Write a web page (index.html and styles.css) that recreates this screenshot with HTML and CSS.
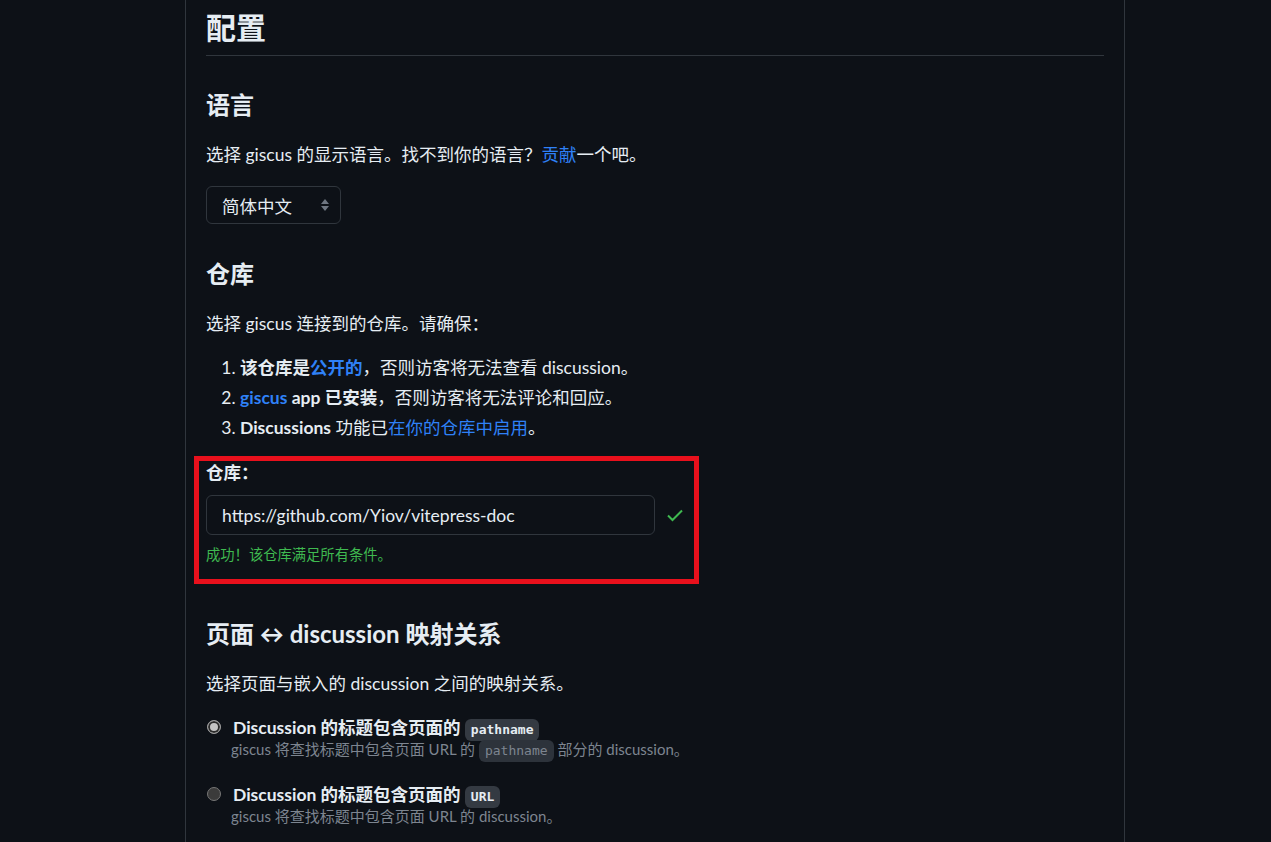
FILE: index.html
```html
<!DOCTYPE html>
<html lang="zh-CN">
<head>
    <meta charset="UTF-8">
    <meta name="viewport" content="width=device-width, initial-scale=1.0">
    <title>giscus 配置</title>
    <link rel="stylesheet" href="styles.css">
</head>
<body>
    <main class="page">
        <h2 class="section-title">配置</h2>

        <h3 class="sub-title first">语言</h3>
        <p class="text">选择 giscus 的显示语言。找不到你的语言？<a href="#">贡献</a>一个吧。</p>
        <div class="select">
            <span>简体中文</span>
            <span class="select-arrows">
                <svg width="10" height="16" viewBox="0 0 10 16"><path d="M5 2 L9 7 H1 Z M1 9 H9 L5 14 Z" fill="#6e7681"/></svg>
            </span>
        </div>

        <h3 class="sub-title">仓库</h3>
        <p class="text">选择 giscus 连接到的仓库。请确保：</p>
        <ol class="checklist">
            <li><strong>该仓库是<a href="#">公开的</a></strong>，否则访客将无法查看 discussion。</li>
            <li><strong><a href="#">giscus</a> app 已安装</strong>，否则访客将无法评论和回应。</li>
            <li><strong>Discussions</strong> 功能已<a href="#">在你的仓库中启用</a>。</li>
        </ol>

        <div class="highlight">
            <label class="field-label">仓库：</label>
            <div class="field-row">
                <div class="input">https://github.com/Yiov/vitepress-doc</div>
                <svg class="check" width="18" height="14" viewBox="0 0 18 14"><path d="M2 7.5 L6.5 12 L16 2.5" fill="none" stroke="#3fb950" stroke-width="2"/></svg>
            </div>
            <p class="success">成功！该仓库满足所有条件。</p>
        </div>

        <h3 class="sub-title">页面 ↔ discussion 映射关系</h3>
        <p class="text">选择页面与嵌入的 discussion 之间的映射关系。</p>

        <div class="radio-list">
            <div class="radio-item">
                <span class="radio checked"></span>
                <div>
                    <div class="radio-label">Discussion 的标题包含页面的 <code class="badge">pathname</code></div>
                    <div class="radio-desc">giscus 将查找标题中包含页面 URL 的 <code class="badge-muted">pathname</code> 部分的 discussion。</div>
                </div>
            </div>
            <div class="radio-item">
                <span class="radio"></span>
                <div>
                    <div class="radio-label">Discussion 的标题包含页面的 <code class="badge">URL</code></div>
                    <div class="radio-desc">giscus 将查找标题中包含页面 URL 的 discussion。</div>
                </div>
            </div>
        </div>
    </main>
</body>
</html>
```

FILE: styles.css
```css
body {
    margin: 0;
    background: #0d1117;
    color: #e6edf3;
    font-family: Lato, "Noto Sans CJK SC", sans-serif;
    font-size: 17.5px;
}
a {
    color: #2f81f7;
    text-decoration: none;
}
.page {
    width: 898px;
    margin-left: 185px;
    padding: 8px 20px 40px;
    border-left: 1px solid #30363d;
    border-right: 1px solid #30363d;
    min-height: 842px;
}
.section-title {
    margin: 0;
    font-size: 30px;
    line-height: 38px;
    padding-bottom: 9px;
    border-bottom: 1px solid #30363d;
}
.sub-title {
    margin: 35px 0 0;
    font-size: 24px;
    line-height: 30px;
}
.sub-title.first {
    margin-top: 34px;
}
.text {
    margin: 21px 0 0;
    line-height: 28px;
}
.select {
    margin-top: 17px;
    width: 135px;
    height: 38px;
    box-sizing: border-box;
    border: 1px solid #30363d;
    border-radius: 6px;
    padding: 0 10px 0 15px;
    display: flex;
    align-items: center;
    justify-content: space-between;
}
.select-arrows {
    display: flex;
}
.checklist {
    margin: 15px 0 0;
    padding-left: 34px;
    line-height: 30px;
}
.checklist strong {
    font-weight: 700;
}
.highlight {
    margin: 13px 0 0 -12px;
    width: 488px;
    border: 5px solid #e8101c;
    padding: 0 0 14px 7px;
}
.field-label {
    display: block;
    font-weight: 700;
    line-height: 24px;
}
.field-row {
    margin-top: 10px;
    display: flex;
    align-items: center;
    gap: 11px;
}
.input {
    width: 449px;
    height: 40px;
    box-sizing: border-box;
    border: 1px solid #30363d;
    border-radius: 6px;
    padding: 0 15px;
    display: flex;
    align-items: center;
}
.success {
    margin: 10px 0 0;
    color: #3fb950;
    font-size: 14.3px;
    line-height: 20px;
}
.radio-list {
    margin-top: 19px;
    display: flex;
    flex-direction: column;
    gap: 25px;
}
.radio-item {
    display: flex;
    gap: 12px;
}
.radio {
    flex: none;
    width: 14px;
    height: 14px;
    margin-top: 3px;
    margin-left: 1px;
    box-sizing: border-box;
    border-radius: 50%;
    background: #3b3b3b;
    border: 1px solid #767676;
}
.radio.checked {
    background: #c4c4c4;
    border: 1px solid #9a9a9a;
    box-shadow: inset 0 0 0 2px #2b2b2b;
}
.radio-label {
    font-weight: 700;
    height: 22px;
    line-height: 22px;
}
.radio-desc {
    margin-left: -2px;
    color: #7d8590;
    font-size: 15px;
    height: 20px;
    line-height: 20px;
}
.badge, .badge-muted {
    display: inline-block;
    font-family: "DejaVu Sans Mono", monospace;
    font-size: 13px;
    line-height: 18px;
    padding: 2px 6px;
    border-radius: 6px;
    vertical-align: middle;
}
.badge {
    background: #343a42;
    color: #e6edf3;
    font-weight: 700;
}
.badge-muted {
    background: #2d333b;
    color: #7d8590;
}
```
